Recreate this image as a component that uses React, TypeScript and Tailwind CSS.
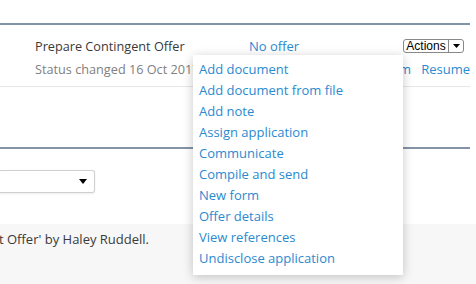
import React from "react";

const items = [
  "Add document",
  "Add document from file",
  "Add note",
  "Assign application",
  "Communicate",
  "Compile and send",
  "New form",
  "Offer details",
  "View references",
  "Undisclose application",
];

export default function App() {
  return (
    <div
      className="relative w-[476px] h-[284px] overflow-hidden bg-white text-[13px] text-[#3a3a3a]"
      style={{ fontFamily: '"Open Sans", sans-serif' }}
    >
      <div className="w-[470px]">
        <div className="h-[23px]" />
        <div className="h-[2px] bg-[#8393a8]" />
        <div className="flex h-[62px] border-b border-[#e6e6e6]">
          <div className="w-[249px] pl-[35px] pt-[11px] text-[12.7px]">
            <div className="leading-[20px] text-[#3a3a3a] whitespace-nowrap">Prepare Contingent Offer</div>
            <div className="leading-[20px] mt-[3px] text-[#808080] whitespace-nowrap">Status changed 16 Oct 2017</div>
          </div>
          <div className="flex-1 pt-[11px]">
            <div className="flex items-center justify-between h-[20px]">
              <span className="text-[#2a8ad0] leading-[20px]">No offer</span>
              <div
                className="flex items-stretch h-[14px] w-[61px] mr-[6px] border border-[#888] rounded-[3px] bg-white text-black"
                style={{ fontFamily: '"Liberation Sans", sans-serif' }}
              >
                <span className="flex-1 text-center text-[12px] leading-[12px]">Actions</span>
                <span className="w-[15px] border-l border-[#888] flex items-center justify-center">
                  <svg width="7" height="4" viewBox="0 0 7 4"><path d="M0 0h7L3.5 4z" fill="#000" /></svg>
                </span>
              </div>
            </div>
            <div className="flex justify-end gap-[10px] mt-[3px] leading-[20px] text-[#2a8ad0]">
              <span>Confirm</span>
              <span>Resume</span>
            </div>
          </div>
        </div>
        <div className="h-[60px]" />
        <div className="h-[2px] bg-[#8393a8]" />
        <div className="h-[21px]" />
        <div className="w-[95px] h-[23px] border border-l-0 border-[#cfcfcf] rounded-r-[3px] shadow-[0_1px_2px_rgba(0,0,0,0.08)] flex items-center justify-end pr-[7px]">
          <svg width="8" height="5" viewBox="0 0 8 5"><path d="M0 0h8L4 5z" fill="#000" /></svg>
        </div>
        <div className="h-[31px]" />
      </div>
      <div className="bg-[#f7f7f7] h-[60px] pt-[5px]">
        <div className="leading-[20px] text-[#3a3a3a] whitespace-nowrap -ml-[1px]">t Offer' by Haley Ruddell.</div>
      </div>

      <div className="absolute left-[193px] top-[55px] w-[210px] bg-white pt-[4px] pb-[6px] shadow-[0_2px_10px_rgba(0,0,0,0.22)]">
        {items.map((t) => (
          <div key={t} className="h-[21px] leading-[21px] pl-[6px] text-[#2a8ad0] whitespace-nowrap">
            {t}
          </div>
        ))}
      </div>
    </div>
  );
}
